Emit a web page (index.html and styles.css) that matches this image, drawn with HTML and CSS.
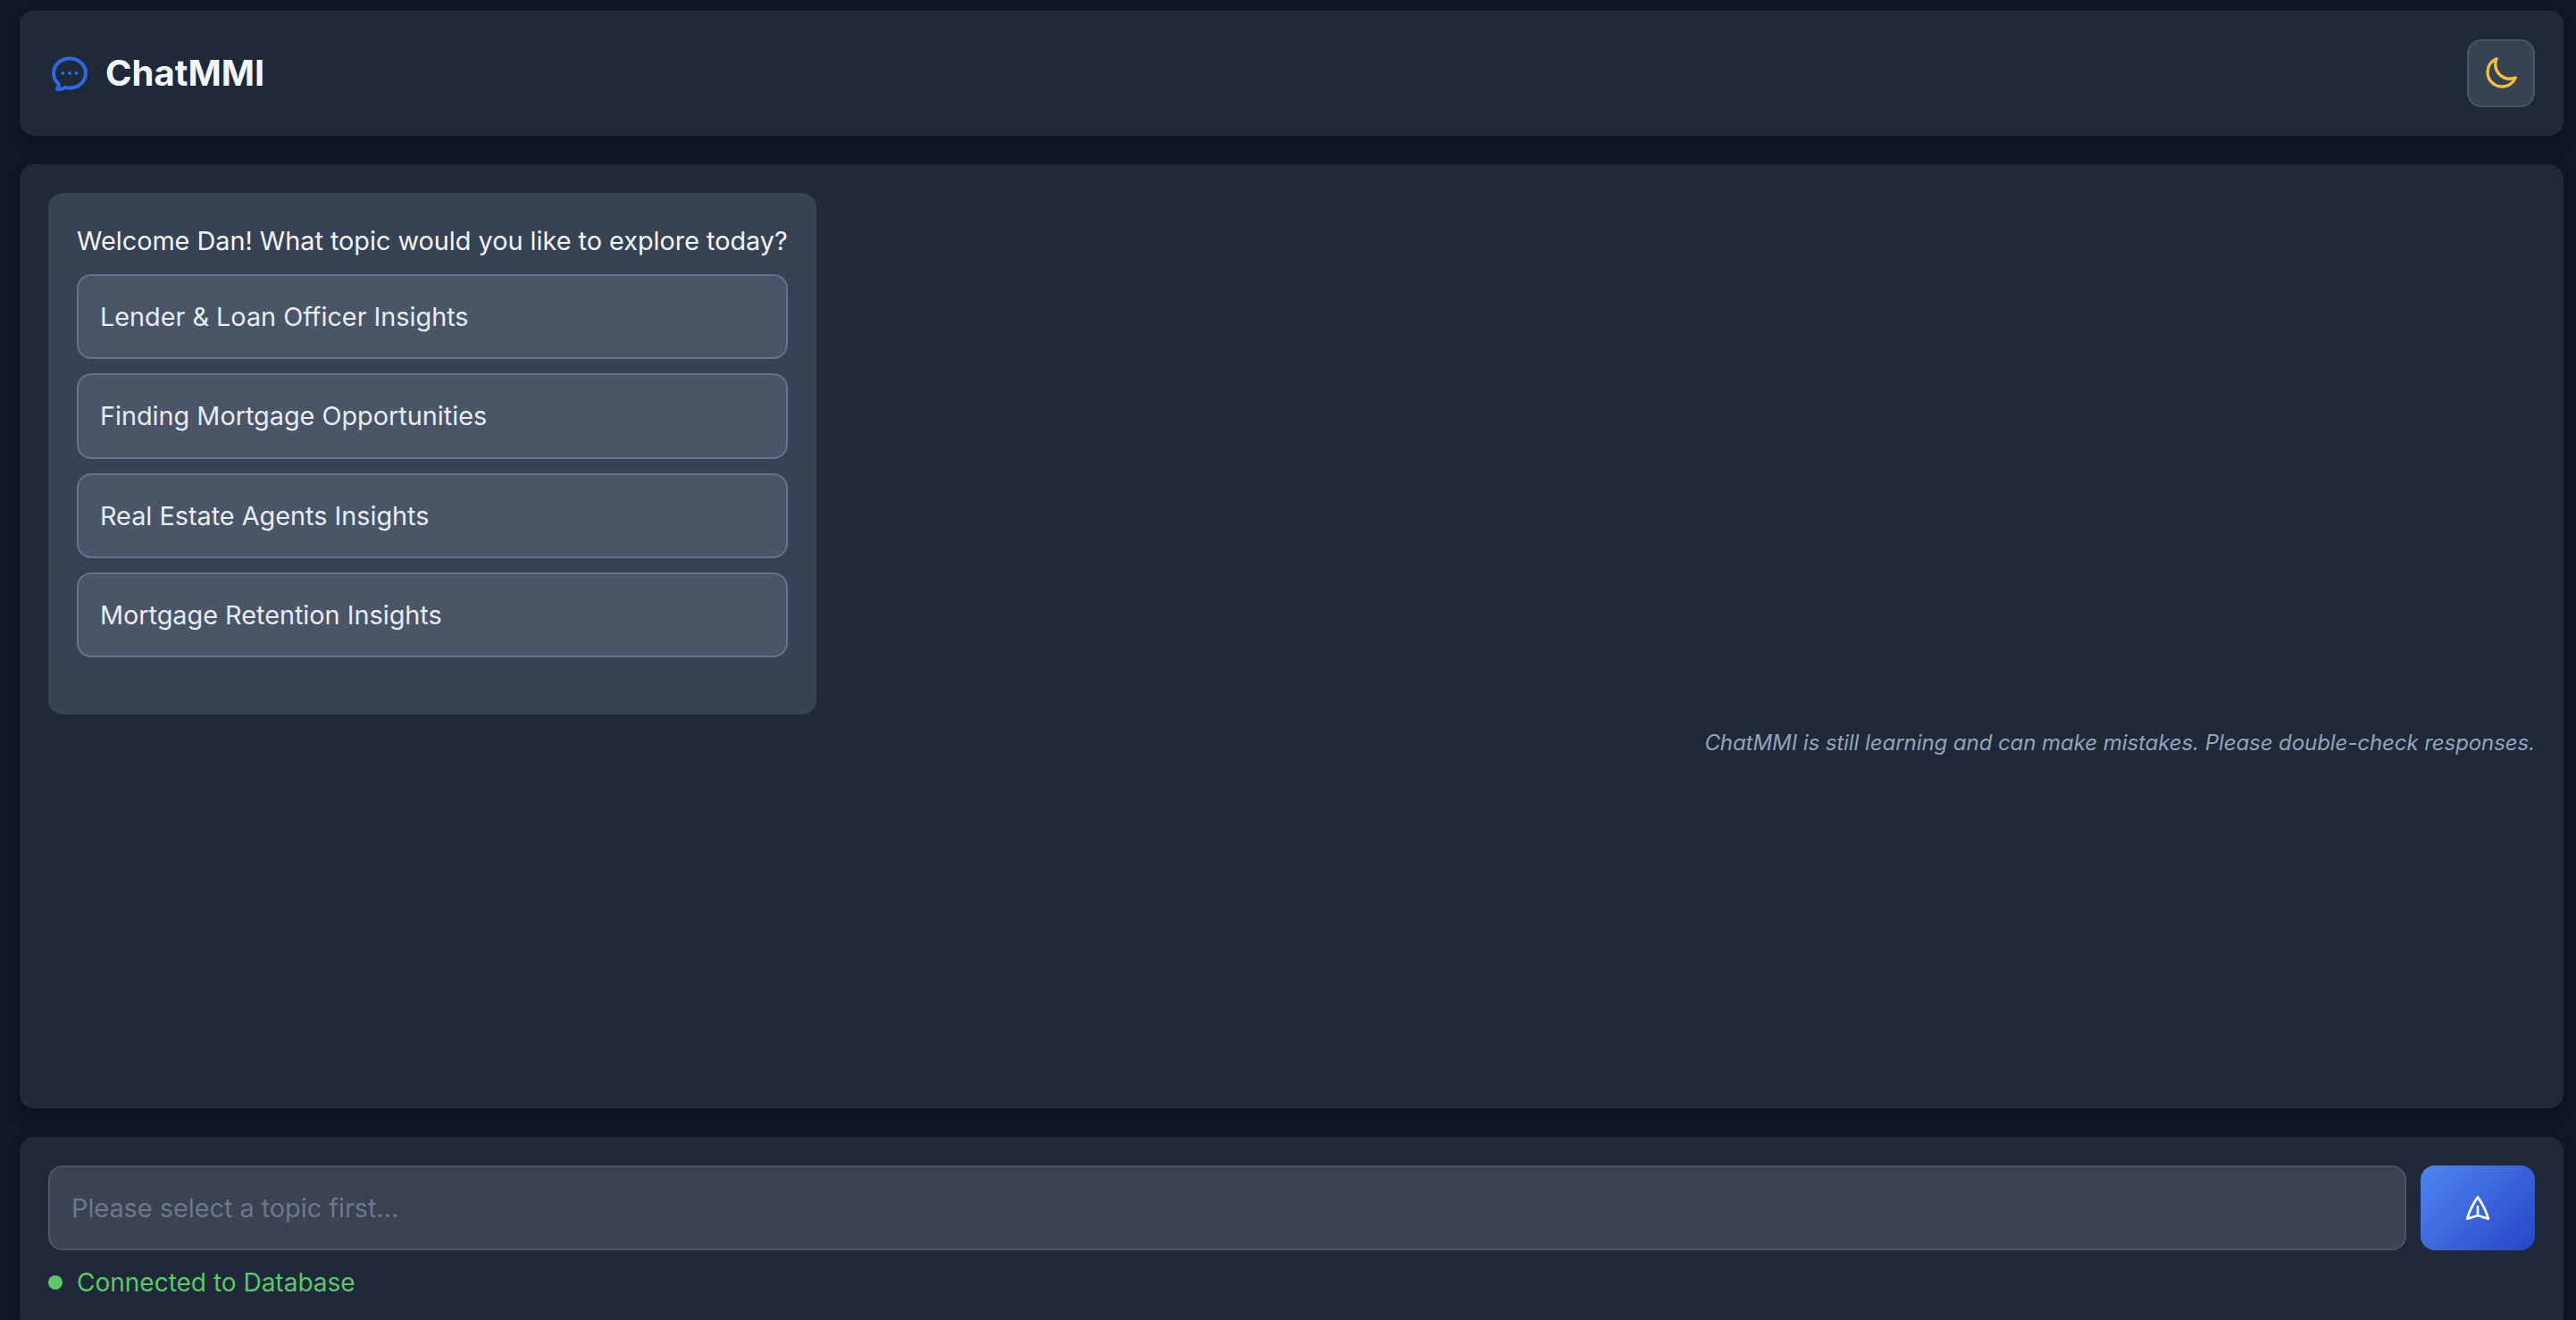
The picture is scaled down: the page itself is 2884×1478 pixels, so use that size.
FILE: index.html
```html
<!DOCTYPE html>
<html lang="en">
<head>
<meta charset="utf-8">
<title>ChatMMI</title>
<link rel="stylesheet" href="styles.css">
</head>
<body>
<div class="app">
  <header class="panel header">
    <div class="brand">
      <svg class="brand-icon" viewBox="0 0 24 24" fill="none" stroke="currentColor" stroke-width="2" stroke-linecap="round" stroke-linejoin="round"><path d="M21 12c0 4.556-4.03 8.25-9 8.25a9.764 9.764 0 01-2.555-.337A5.972 5.972 0 015.41 20.97a5.969 5.969 0 01-.474-.065 4.48 4.48 0 00.978-2.025c.09-.457-.133-.901-.467-1.226C3.93 16.178 3 14.189 3 12c0-4.556 4.03-8.25 9-8.25s9 3.694 9 8.25z"/><circle class="brand-dot" cx="8.25" cy="12" r="1"/><circle class="brand-dot" cx="12" cy="12" r="1"/><circle class="brand-dot" cx="15.75" cy="12" r="1"/></svg>
      <h1 class="title">ChatMMI</h1>
    </div>
    <button class="theme-btn" type="button">
      <svg class="moon" viewBox="0 0 24 24" fill="none" stroke="currentColor" stroke-width="2" stroke-linecap="round" stroke-linejoin="round"><path d="M21.752 15.002A9.718 9.718 0 0118 15.75c-5.385 0-9.75-4.365-9.75-9.75 0-1.33.266-2.597.748-3.752A9.753 9.753 0 003 11.25C3 16.635 7.365 21 12.75 21a9.753 9.753 0 009.002-5.998z"/></svg>
    </button>
  </header>
  <main class="panel chat">
    <div class="bubble">
      <p class="welcome">Welcome Dan! What topic would you like to explore today?</p>
      <div class="topics">
        <button class="topic" type="button">Lender &amp; Loan Officer Insights</button>
        <button class="topic" type="button">Finding Mortgage Opportunities</button>
        <button class="topic" type="button">Real Estate Agents Insights</button>
        <button class="topic" type="button">Mortgage Retention Insights</button>
      </div>
    </div>
    <p class="disclaimer">ChatMMI is still learning and can make mistakes. Please double-check responses.</p>
  </main>
  <footer class="panel composer">
    <div class="input-row">
      <input class="input" type="text" placeholder="Please select a topic first..." disabled>
      <button class="send" type="button">
        <svg class="send-icon" viewBox="0 0 24 24" fill="none" stroke="currentColor" stroke-width="2" stroke-linecap="round" stroke-linejoin="round"><path d="M6 12L3.269 3.126A59.768 59.768 0 0121.485 12 59.77 59.77 0 013.27 20.876L5.999 12zm0 0h7.5"/></svg>
      </button>
    </div>
    <div class="status"><span class="dot"></span><span>Connected to Database</span></div>
  </footer>
</div>
</body>
</html>
```
FILE: styles.css
```css
* { box-sizing: border-box; }
html, body { margin: 0; height: 100%; }
body {
  background: #111729;
  font-family: Inter, "Liberation Sans", sans-serif;
  overflow: hidden;
}
.app {
  display: flex;
  flex-direction: column;
  gap: 32px;
  padding: 12px 14px 0 22px;
}
.panel {
  background: #1f293a;
  border-radius: 16px;
  box-shadow: 0 8px 16px rgba(0, 0, 0, 0.25);
}
.header {
  height: 140px;
  padding: 0 32px;
  display: flex;
  align-items: center;
  justify-content: space-between;
}
.brand { display: flex; align-items: center; gap: 16px; }
.brand-icon { width: 48px; height: 48px; color: #3068e4; display: block; }
.brand-dot { fill: currentColor; stroke: none; }
.title { margin: 0; font-size: 40px; font-weight: 700; color: #f3f6fb; line-height: 48px; }
.theme-btn {
  width: 76px;
  height: 76px;
  padding: 0;
  display: flex;
  align-items: center;
  justify-content: center;
  background: #384255;
  border: 2px solid #4a5568;
  border-radius: 16px;
}
.moon { width: 40px; height: 40px; color: #f8c03f; display: block; }
.chat {
  height: 1057px;
  padding: 32px;
  display: flex;
  flex-direction: column;
  align-items: flex-start;
}
.bubble {
  width: 860px;
  padding: 32px;
  background: #384255;
  border-radius: 16px;
  color: #f3f6fb;
}
.welcome { margin: 0 0 16px; font-size: 28.8px; line-height: 43.2px; white-space: nowrap; }
.topics { display: flex; flex-direction: column; gap: 16px; padding-bottom: 32px; }
.topic {
  padding: 24px;
  text-align: left;
  font: inherit;
  font-size: 28.8px;
  line-height: 43.2px;
  color: #e8ecf3;
  background: #4a5568;
  border: 2px solid #64748b;
  border-radius: 16px;
}
.disclaimer {
  align-self: flex-end;
  margin: 13px 0 0;
  font-size: 24px;
  line-height: 38px;
  font-style: italic;
  letter-spacing: -0.07px;
  color: #94a3b8;
}
.composer { padding: 32px; }
.input-row { display: flex; gap: 16px; height: 95px; }
.input {
  flex: 1;
  min-width: 0;
  padding: 0 24px;
  font: inherit;
  font-size: 28.8px;
  color: #e5e9f0;
  background: #3b4252;
  border: 2px solid #4a5568;
  border-radius: 16px;
}
.input::placeholder { color: #6a7890; opacity: 1; }
.send {
  width: 128px;
  padding: 0;
  display: flex;
  align-items: center;
  justify-content: center;
  border: 0;
  border-radius: 16px;
  background: linear-gradient(135deg, #4f86f0, #2746c8);
}
.send-icon { width: 32px; height: 32px; color: #fff; display: block; transform: rotate(-90deg); }
.status {
  display: flex;
  align-items: center;
  gap: 16px;
  margin-top: 16px;
  font-size: 28px;
  line-height: 40px;
  color: #5ec769;
}
.dot { width: 16px; height: 16px; border-radius: 50%; background: #5ec769; }
```
